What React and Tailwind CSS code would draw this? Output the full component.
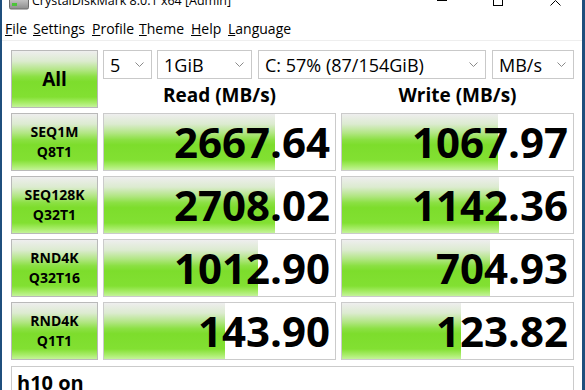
import React from "react";

const GREEN =
  "bg-[linear-gradient(to_bottom,#eeeeee_0%,#dcebd0_18%,#b2e684_34%,#8be043_46%,#7ddd2c_55%,#82e032_82%,#a6ec66_92%,#c4f39a_100%)]";

const rows = [
  { a: "SEQ1M", b: "Q8T1", read: "2667.64", write: "1067.97", rw: "w-[171px]", ww: "w-[156px]" },
  { a: "SEQ128K", b: "Q32T1", read: "2708.02", write: "1142.36", rw: "w-[171px]", ww: "w-[157px]" },
  { a: "RND4K", b: "Q32T16", read: "1012.90", write: "704.93", rw: "w-[154px]", ww: "w-[148px]" },
  { a: "RND4K", b: "Q1T1", read: "143.90", write: "123.82", rw: "w-[121px]", ww: "w-[119px]" },
];

function Chevron() {
  return (
    <svg width="9" height="5" viewBox="0 0 9 5" className="shrink-0">
      <path d="M0.5 0.5 L4.5 4.5 L8.5 0.5" fill="none" stroke="#8a8a8a" strokeWidth="1" />
    </svg>
  );
}

function Combo({ w, text, gapClass = "" }) {
  return (
    <div className={`${w} ${gapClass} h-[29px] border border-[#c9c9c9] bg-white flex items-center justify-between pl-[6px] pr-[7px]`}>
      <span className="text-[18px] leading-none text-black whitespace-nowrap">{text}</span>
      <Chevron />
    </div>
  );
}

function Meter({ value, fill }) {
  return (
    <div className="relative h-[58px] border border-[#cbcbcb] bg-white overflow-hidden flex items-center justify-end pr-[5px]">
      <div className={`absolute left-0 top-0 bottom-0 ${fill} ${GREEN}`} />
      <span className="relative font-bold text-[42px] leading-none text-black">{value}</span>
    </div>
  );
}

export default function App() {
  return (
    <div className="w-[585px] h-[390px] overflow-hidden bg-white flex flex-col border-l-2 border-r-[3px] border-[#1f4f7d] font-['Open_Sans',sans-serif] text-black">
      {/* title bar, cut off at the top */}
      <div className="h-[18px] shrink-0 overflow-hidden flex items-start">
        <svg width="20" height="10" viewBox="0 0 20 10" className="ml-[7px] shrink-0">
          <defs>
            <linearGradient id="drv" x1="0" y1="0" x2="0" y2="1">
              <stop offset="0" stopColor="#d8d8d8" />
              <stop offset="1" stopColor="#8c8c8c" />
            </linearGradient>
          </defs>
          <rect x="0.5" y="-4" width="19" height="13" rx="1.5" fill="url(#drv)" stroke="#6d6d6d" />
          <rect x="3" y="3" width="5" height="3" fill="#4cc43a" />
        </svg>
        <span className="ml-[3px] -mt-[9px] text-[12.5px] leading-[20px] whitespace-nowrap">CrystalDiskMark 8.0.1 x64 [Admin]</span>
        <div className="ml-auto flex items-start">
          <div className="w-[10px] h-px bg-black mr-[46px]" />
          <div className="w-[10px] h-[6px] border border-t-0 border-black mr-[47px]" />
          <svg width="11" height="6" viewBox="0 0 11 6" className="mr-[21px]">
            <path d="M0.5 5.5 L5.5 0.5 L10.5 5.5" fill="none" stroke="#000" strokeWidth="1" />
          </svg>
        </div>
      </div>

      {/* menu bar */}
      <div className="h-[23px] shrink-0 flex items-center pl-[3px] text-[14px] leading-none border-b border-[#eeeeee]">
        <span className="w-[28px]"><u>F</u>ile</span>
        <span className="w-[59px]"><u>S</u>ettings</span>
        <span className="w-[47px]"><u>P</u>rofile</span>
        <span className="w-[52px]"><u>T</u>heme</span>
        <span className="w-[37px]"><u>H</u>elp</span>
        <span><u>L</u>anguage</span>
      </div>

      {/* main */}
      <div className="flex-1 pl-[9px] pr-[8px] pt-[9px] flex flex-col">
        <div className="grid grid-cols-[87px_233px_233px] auto-rows-[58px] gap-x-[5px] gap-y-[5px]">
          <div className={`border border-[#b9b9b9] ${GREEN} flex items-center justify-center font-bold text-[19px]`}>All</div>
          <div className="col-span-2 flex flex-col">
            <div className="flex">
              <Combo w="w-[49px]" text="5" />
              <Combo w="w-[95px]" gapClass="ml-[5px]" text="1GiB" />
              <Combo w="w-[228px]" gapClass="ml-[6px]" text="C: 57% (87/154GiB)" />
              <Combo w="w-[82px]" gapClass="ml-[6px]" text="MB/s" />
            </div>
            <div className="flex-1 grid grid-cols-2 gap-x-[5px] items-end">
              <div className="text-center font-bold text-[19px] leading-[26px]">Read (MB/s)</div>
              <div className="text-center font-bold text-[19px] leading-[26px]">Write (MB/s)</div>
            </div>
          </div>

          {rows.map((r, i) => (
            <React.Fragment key={i}>
              <div className={`border border-[#b9b9b9] ${GREEN} flex flex-col items-center justify-center font-bold text-[14px] leading-[20px]`}>
                <span>{r.a}</span>
                <span>{r.b}</span>
              </div>
              <Meter value={r.read} fill={r.rw} />
              <Meter value={r.write} fill={r.ww} />
            </React.Fragment>
          ))}
        </div>

        <div className="mt-[6px] flex-1 border border-[#cbcbcb] bg-white px-[5px] pt-[3px]">
          <span className="font-bold text-[20px] leading-[26px]">h10 on</span>
        </div>
      </div>
    </div>
  );
}
